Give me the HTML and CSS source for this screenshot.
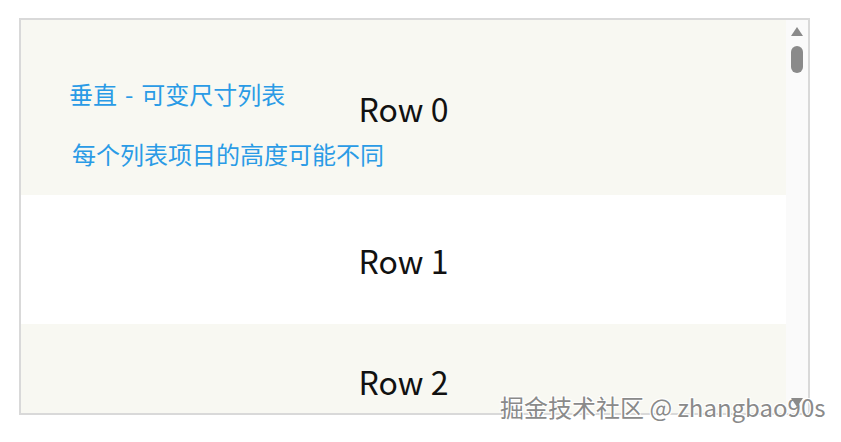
FILE: index.html
```html
<!DOCTYPE html>
<html lang="zh-CN">
<head>
<meta charset="utf-8">
<link rel="stylesheet" href="styles.css">
</head>
<body>
<div class="frame">
  <div class="list">
    <div class="row row-odd row-0">
      <span class="label">Row 0</span>
      <div class="intro">
        <div class="intro-title">垂直<span class="dash">-</span>可变尺寸列表</div>
        <div class="intro-desc">每个列表项目的高度可能不同</div>
      </div>
    </div>
    <div class="row row-even row-1"><span class="label">Row 1</span></div>
    <div class="row row-odd row-2"><span class="label">Row 2</span></div>
  </div>
  <div class="scrollbar">
    <div class="arrow-up"></div>
    <div class="thumb"></div>
    <div class="track"></div>
    <div class="arrow-down"></div>
  </div>
</div>
<div class="watermark">掘金技术社区 @ zhangbao90s</div>
</body>
</html>
```
FILE: styles.css
```css
html, body {
  margin: 0;
  padding: 0;
  background: #ffffff;
  font-family: "Noto Sans CJK SC", "Noto Sans", sans-serif;
}
body {
  width: 841px;
  height: 442px;
  position: relative;
  overflow: hidden;
}
.frame {
  margin: 18px 0 0 19px;
  width: 791px;
  height: 397px;
  box-sizing: border-box;
  border: 2px solid #d9d9d9;
  display: flex;
  overflow: hidden;
}
.list {
  flex: 1;
  display: flex;
  flex-direction: column;
}
.row {
  display: flex;
  align-items: center;
  justify-content: center;
  flex-shrink: 0;
  position: relative;
  box-sizing: border-box;
}
.row-odd { background: #f8f8f2; }
.row-even { background: #ffffff; }
.row-0 { height: 175px; padding-top: 1px; }
.row-1 { height: 129px; padding-top: 0px; }
.row-2 { height: 130px; padding-bottom: 16px; }
.label {
  font-size: 32px;
  color: #111111;
  line-height: 1;
}
.intro {
  position: absolute;
  left: 48px;
  top: 62px;
  color: #2a9be6;
  font-size: 24px;
  line-height: 1;
}
.dash { margin: 0 8px; }
.intro-title { margin-bottom: 36px; }
.intro-desc { margin-left: 3px; }
.scrollbar {
  width: 22px;
  background: #fafafa;
  display: flex;
  flex-direction: column;
  align-items: center;
}
.arrow-up {
  margin-top: 7px;
  width: 0;
  height: 0;
  border-left: 6px solid transparent;
  border-right: 6px solid transparent;
  border-bottom: 9px solid #8a8a8a;
}
.thumb {
  margin-top: 10px;
  width: 12px;
  height: 27px;
  border-radius: 6px;
  background: #8a8a8a;
}
.track { flex: 1; }
.arrow-down {
  margin-bottom: 6px;
  width: 0;
  height: 0;
  border-left: 6px solid transparent;
  border-right: 6px solid transparent;
  border-top: 9px solid #8a8a8a;
  position: relative;
  z-index: 2;
}
.watermark {
  position: absolute;
  left: 500px;
  top: 393px;
  font-size: 24px;
  color: #8a8a8a;
  text-shadow: 1px 1px 0 #ffffff, -1px -1px 0 #ffffff, 1px -1px 0 #ffffff, -1px 1px 0 #ffffff;
  white-space: nowrap;
  line-height: 1.2;
  z-index: 1;
}
```
